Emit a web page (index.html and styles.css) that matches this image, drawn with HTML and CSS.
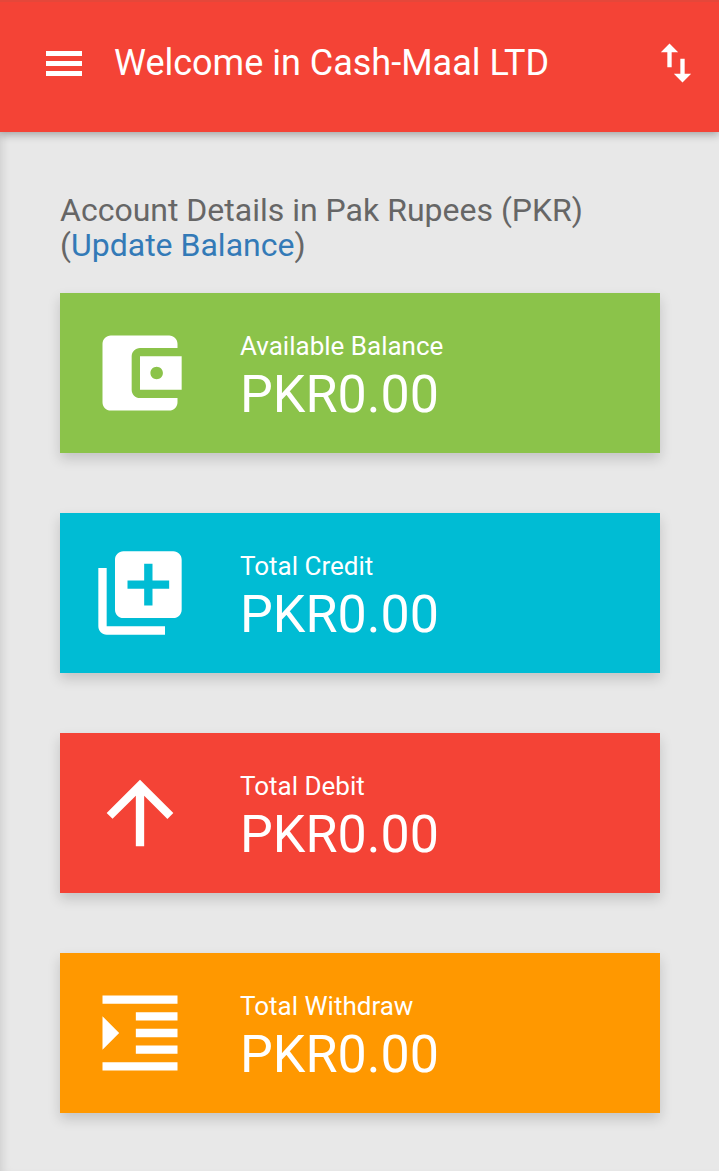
FILE: index.html
```html
<!DOCTYPE html>
<html lang="en">
<head>
<meta charset="utf-8">
<title>Cash-Maal LTD</title>
<link rel="stylesheet" href="styles.css">
</head>
<body>
<header class="topbar">
  <button class="menu-btn" aria-label="Menu"><span></span><span></span><span></span></button>
  <h1 class="title">Welcome in Cash-Maal LTD</h1>
  <svg class="swap" viewBox="0 0 24 24"><path d="M16 17.01V10h-2v7.01h-3L15 21l4-3.99h-3zM9 3L5 6.99h3V14h2V6.99h3L9 3z"/></svg>
</header>
<main class="content">
  <h2 class="heading">Account Details in Pak Rupees (PKR)<br>(<a href="#">Update Balance</a>)</h2>
  <section class="card green">
    <svg class="icon" viewBox="0 0 24 24"><path d="M21 18v1c0 1.1-.9 2-2 2H5c-1.11 0-2-.9-2-2V5c0-1.1.89-2 2-2h14c1.1 0 2 .9 2 2v1h-9c-1.11 0-2 .9-2 2v8c0 1.1.89 2 2 2h9zm-9-2h10V8H12v8zm4-2.5c-.83 0-1.5-.67-1.5-1.5s.67-1.5 1.5-1.5 1.5.67 1.5 1.5-.67 1.5-1.5 1.5z"/></svg>
    <div class="info"><div class="label">Available Balance</div><div class="value">PKR0.00</div></div>
  </section>
  <section class="card cyan">
    <svg class="icon" viewBox="0 0 24 24"><path d="M4 6H2v14c0 1.1.9 2 2 2h14v-2H4V6zm16-4H8c-1.1 0-2 .9-2 2v12c0 1.1.9 2 2 2h12c1.1 0 2-.9 2-2V4c0-1.1-.9-2-2-2zm-1 9h-4v4h-2v-4H9V9h4V5h2v4h4v2z"/></svg>
    <div class="info"><div class="label">Total Credit</div><div class="value">PKR0.00</div></div>
  </section>
  <section class="card red">
    <svg class="icon" viewBox="0 0 24 24"><path d="M4 12l1.41 1.41L11 7.83V20h2V7.83l5.58 5.59L20 12l-8-8-8 8z"/></svg>
    <div class="info"><div class="label">Total Debit</div><div class="value">PKR0.00</div></div>
  </section>
  <section class="card orange">
    <svg class="icon" viewBox="0 0 24 24"><path d="M3 21h18v-2H3v2zM3 8v8l4-4-4-4zm8 9h10v-2H11v2zM3 3v2h18V3H3zm8 6h10V7H11v2zm0 4h10v-2H11v2z"/></svg>
    <div class="info"><div class="label">Total Withdraw</div><div class="value">PKR0.00</div></div>
  </section>
</main>
</body>
</html>
```
FILE: styles.css
```css
* { box-sizing: border-box; }
html, body { margin: 0; height: 100%; }
body {
  font-family: Roboto, "Liberation Sans", sans-serif;
  background: #e8e8e8;
  overflow: hidden;
}
.topbar {
  height: 132px;
  display: flex;
  align-items: flex-start;
  background: #f44336;
  border-top: 2px solid #e5473a;
  color: #fff;
  box-shadow: 0 3px 8px rgba(0, 0, 0, .28);
  position: relative;
  z-index: 1;
}
.menu-btn {
  width: 36px;
  height: 25px;
  margin: 49px 0 0 46px;
  padding: 0;
  border: 0;
  background: none;
  display: flex;
  flex-direction: column;
  justify-content: space-between;
}
.menu-btn span { display: block; height: 5px; background: #fff; }
.title {
  flex: 1;
  margin: 39px 0 0 32px;
  font-size: 36px;
  line-height: 45px;
  font-weight: 400;
}
.swap { width: 52px; height: 52px; margin: 35px 17px 0 0; fill: #fff; }
.content {
  height: 1039px;
  padding: 61px 59px 0 60px;
  box-shadow: inset 8px 0 10px -6px rgba(0, 0, 0, .12);
}
.heading {
  margin: 0 0 30px;
  font-size: 32px;
  line-height: 35px;
  font-weight: 400;
  color: #666;
}
.heading a { color: #337ab7; text-decoration: none; }
.card {
  height: 160px;
  margin-bottom: 60px;
  display: flex;
  align-items: flex-start;
  color: #fff;
  box-shadow: 0 6px 12px rgba(0, 0, 0, .16);
}
.green { background: #8bc34a; }
.cyan { background: #00bcd4; }
.red { background: #f44336; }
.orange { background: #ff9800; }
.icon { width: 100px; height: 100px; margin: 30px 0 0 30px; fill: #fff; flex: none; }
.info { margin: 36px 0 0 50px; }
.label { font-size: 26px; line-height: 34px; margin-bottom: 1px; }
.value { font-size: 52px; line-height: 62px; }
```
